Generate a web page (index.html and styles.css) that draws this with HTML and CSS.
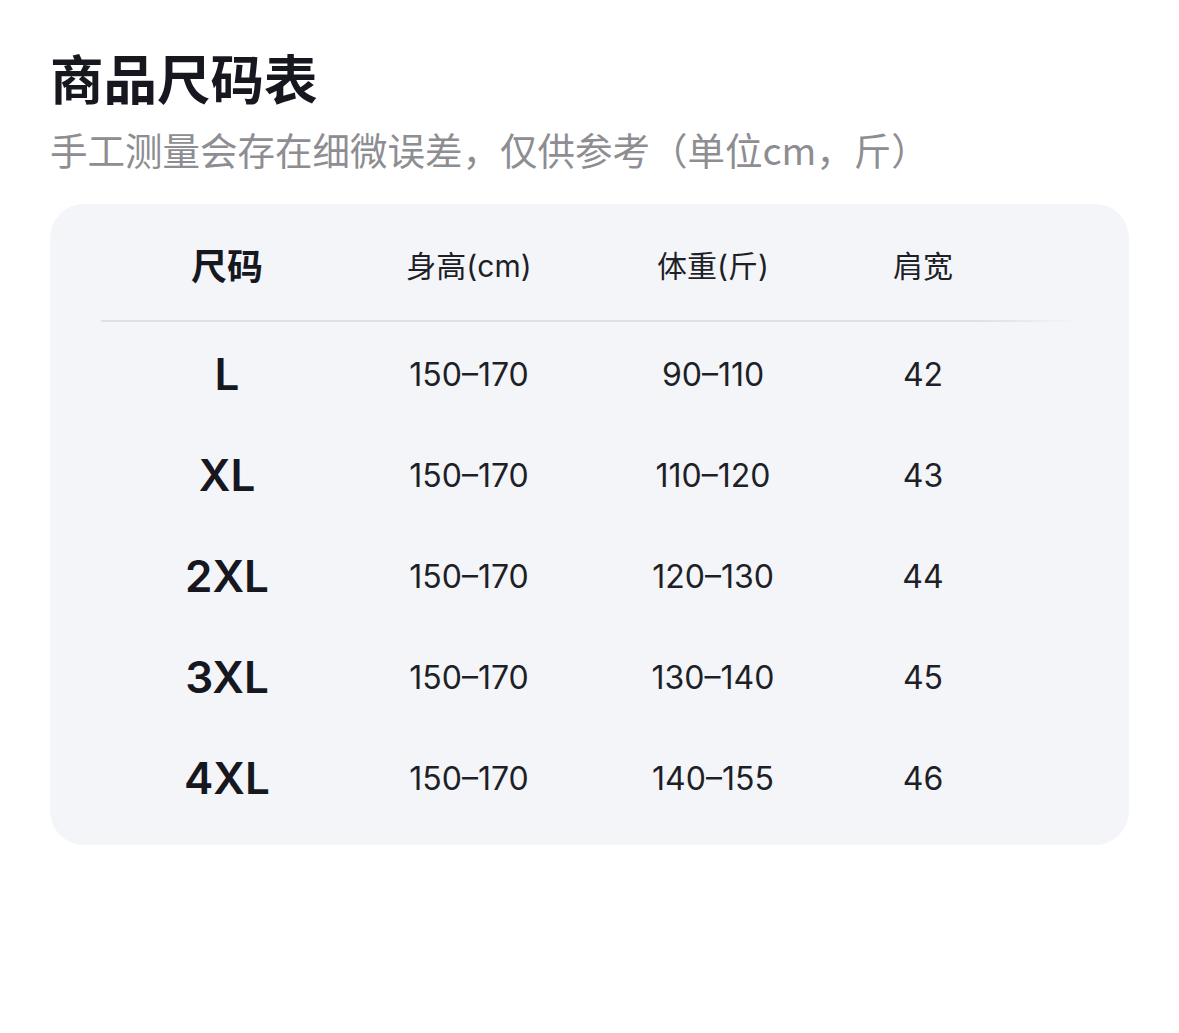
FILE: index.html
```html
<!DOCTYPE html>
<html lang="zh-CN">
<head>
<meta charset="utf-8">
<title>商品尺码表</title>
<link rel="stylesheet" href="styles.css">
</head>
<body>
<main class="page">
  <h1 class="title">商品尺码表</h1>
  <p class="subtitle">手工测量会存在细微误差，仅供参考（单位cm，斤）</p>
  <section class="card">
    <div class="table">
      <div class="row head">
        <div class="cell size">尺码</div>
        <div class="cell">身高(cm)</div>
        <div class="cell">体重(斤)</div>
        <div class="cell">肩宽</div>
      </div>
      <div class="divider"></div>
      <div class="row">
        <div class="cell size">L</div>
        <div class="cell">150–170</div>
        <div class="cell">90–110</div>
        <div class="cell">42</div>
      </div>
      <div class="row">
        <div class="cell size">XL</div>
        <div class="cell">150–170</div>
        <div class="cell">110–120</div>
        <div class="cell">43</div>
      </div>
      <div class="row">
        <div class="cell size">2XL</div>
        <div class="cell">150–170</div>
        <div class="cell">120–130</div>
        <div class="cell">44</div>
      </div>
      <div class="row">
        <div class="cell size">3XL</div>
        <div class="cell">150–170</div>
        <div class="cell">130–140</div>
        <div class="cell">45</div>
      </div>
      <div class="row">
        <div class="cell size">4XL</div>
        <div class="cell">150–170</div>
        <div class="cell">140–155</div>
        <div class="cell">46</div>
      </div>
    </div>
  </section>
</main>
</body>
</html>
```

FILE: styles.css
```css
* { box-sizing: border-box; }
html, body { margin: 0; padding: 0; background: #ffffff; }
body {
  font-family: "Inter", "Noto Sans CJK SC", sans-serif;
  color: #1b1c24;
}
.page {
  padding: 44px 50px 0 50px;
}
.title {
  margin: 0;
  font-size: 53.5px;
  line-height: 66px;
  font-weight: 700;
  font-family: "Noto Sans CJK SC", sans-serif;
  color: #16171f;
}
.subtitle {
  margin: 14px 0 0 0;
  font-size: 37.5px;
  line-height: 50px;
  color: #8d8d92;
  font-family: "Noto Sans CJK SC", sans-serif;
}
.card {
  margin-top: 30px;
  width: 1079px;
  height: 641px;
  background: #f4f5f9;
  border-radius: 34px;
  padding: 8px 51px 0 51px;
}
.table {
  width: 977px;
}
.row {
  display: grid;
  grid-template-columns: 252px 232px 256px 164px 1fr;
  height: 101px;
  align-items: center;
  padding-top: 3px;
}
.row.head {
  height: 104px;
  margin-bottom: 4px;
  padding-top: 0;
}
.cell {
  text-align: center;
  font-size: 32px;
  color: #1e1f27;
}
.head .cell {
  font-size: 30px;
  font-family: "Inter", "Noto Sans CJK SC", sans-serif;
}
.head .cell.size {
  font-size: 36px;
  font-weight: 700;
  font-family: "Noto Sans CJK SC", sans-serif;
}
.cell.size {
  font-size: 44px;
  font-weight: 600;
  color: #16171f;
}
.divider {
  height: 2px;
  background: linear-gradient(to right, #dfe0e5 0%, #dfe0e5 90%, rgba(223,224,229,0) 100%);
}
```
